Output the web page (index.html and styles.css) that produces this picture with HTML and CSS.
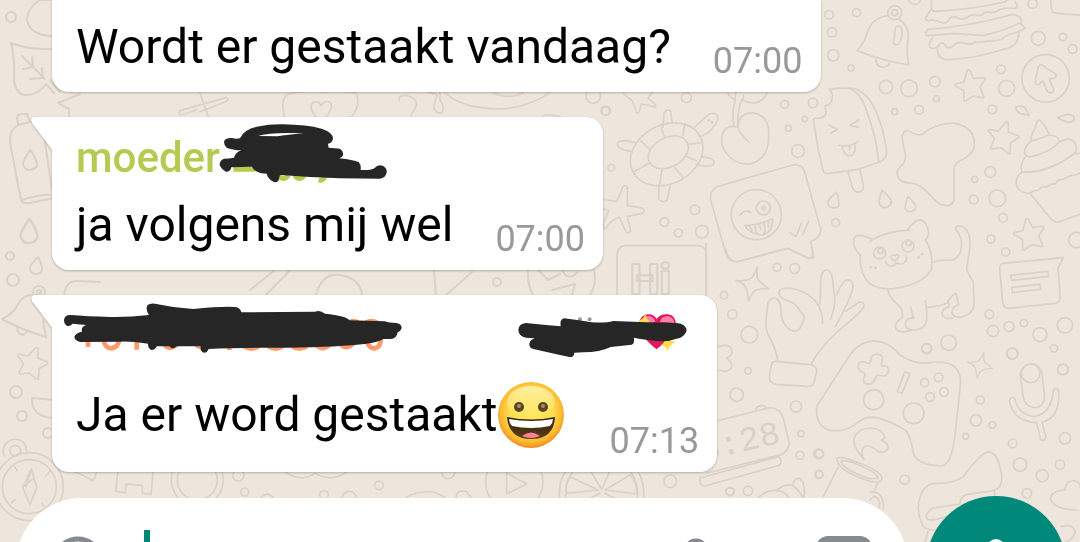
FILE: index.html
```html
<!DOCTYPE html>
<html lang="nl">
<head>
  <meta charset="utf-8">
  <meta name="viewport" content="width=device-width, initial-scale=1">
  <title>Chat</title>
  <link rel="stylesheet" href="styles.css">
</head>
<body>

<!-- Wallpaper doodles -->
<svg class="wallpaper" width="1080" height="542" viewBox="0 0 1080 542" aria-hidden="true">
  <defs>
    <path id="star" d="M-8 -48 Q-3 -50 1 -43 L11 -22 L42 -25 Q48 -23 44 -18 L30 4 L42 32 Q42 38 35 35 L10 30 L-14 46 Q-20 46 -18 38 L-18 14 L-44 0 Q-48 -4 -42 -6 L-18 -12 Z"/>
    <path id="drop" d="M0 -26 Q-20 2 -17 10 Q-12 24 2 22 Q18 18 16 6 Q12 -10 0 -26 Z"/>
    <path id="sparkle" d="M14 -50 Q11 -20 18 -10 L48 14 Q18 12 4 22 Q-8 35 -12 50 Q-16 20 -22 8 Q-32 -6 -50 -10 Q-18 -8 -4 -18 Q8 -30 14 -50 Z"/>
    <path id="bell" d="M-85 49 Q-70 32 -62 14 Q-52 -18 -43 -30 Q-28 -50 0 -55 Q4 -56 8 -57 M38 -47 Q60 -32 66 -12 Q70 6 65 30 Q62 65 70 92 Q-8 80 -85 49 M-30 75 Q-28 98 -8 98 Q8 98 12 87"/>
  </defs>

  <!-- top right: bell, burger, ice cream, puddle, cupcake -->
  <g transform="translate(820 0) scale(.3333)">
    <use href="#bell" x="197" y="103"/>
    <circle cx="224" cy="38" r="21"/><circle cx="224" cy="38" r="9"/>
    <path d="M226 82 Q236 74 244 84 Q250 104 240 126 Q234 140 223 132 Q217 128 224 108 Z"/>
    <path d="M335 -5 L334 28 Q336 34 346 34 Q460 28 555 6 L568 -5 M330 32 L316 56 Q320 66 335 60 Q350 60 365 68 Q380 74 388 56 Q400 44 415 55 Q432 62 450 46 Q470 46 485 46 Q495 30 512 38 Q530 36 540 28 Q560 22 588 25 Q596 18 586 5 M324 88 Q440 80 560 48 Q580 40 594 48 Q606 54 604 66 M324 88 Q312 102 320 107 L400 101 L490 106 Q550 94 600 68 Q608 76 616 85 Q600 94 575 102 Q558 104 545 118 Q530 124 510 122 Q480 130 465 126 Q450 138 430 128 Q412 124 402 136 Q390 148 378 140 Q370 122 360 132 Q348 148 335 145 Q320 140 338 112 M352 144 Q350 180 388 179 Q470 175 550 148 Q600 138 596 96"/>
    <path d="M692 -5 L694 25 Q697 40 712 40 L785 46"/>
    <circle cx="677" cy="235" r="71"/>
    <path d="M664 194 Q654 196 654 206 L646 240 Q645 256 656 255 L668 242 L682 274 Q690 282 698 277 Q704 272 698 262 L688 237 Q702 238 707 230 Q712 224 704 220 Z"/>
    <use href="#star" x="450" y="258"/><use href="#star" transform="translate(546 412) rotate(25)"/>
    <path d="M587 322 Q600 314 614 322 L628 346 L600 340 Q588 334 587 322 Z M713 353 L740 343 Q762 343 763 355 Q762 367 745 367 Q724 362 713 353 Z"/>
    <!-- ice cream -->
    <path d="M28 268 Q70 262 104 266 Q140 276 166 330 Q190 380 200 455 Q200 472 182 485 L115 508 L22 521 Q10 520 9 510 L-5 450 L-20 360 Q-18 352 0 355 Q20 350 18 335 L14 318 Q30 316 34 304 Q42 280 28 268 M85 264 Q120 276 135 320 Q170 410 176 486 M84 516 L96 560 Q104 580 118 576 Q132 570 130 556 L120 508 M28 376 L52 388 L32 400 M116 360 L90 376 L116 382 M56 436 Q86 444 114 424 M66 440 Q72 464 86 468 Q106 470 106 436 M88 440 L89 450"/>
    <!-- puddle -->
    <path d="M264 392 Q294 410 308 402 Q348 368 402 370 Q466 380 463 436 Q460 464 425 480 Q402 488 402 510 L402 580 Q406 610 388 616 Q360 622 335 590 Q300 550 272 549 Q232 548 231 518 Q234 505 250 492 Q262 470 252 445 Q246 420 247 408 Q250 392 264 392 Z"/>
    <!-- cupcake -->
    <path d="M632 424 Q634 400 646 385 Q648 364 658 359 Q674 372 688 404 Q672 412 632 424 M632 424 Q612 440 614 458 Q618 474 634 470 Q692 458 720 424 Q710 404 688 406 M614 472 Q598 500 606 516 Q690 520 768 456 Q772 424 750 418 Q736 416 720 426 M606 517 Q584 530 590 558 Q600 580 630 580 M630 580 Q640 570 654 572 Q664 556 680 562 Q690 550 706 552 Q712 538 730 538 Q750 524 765 526 L790 514 M770 462 L790 458 M630 580 L694 658 Q705 670 722 664 L790 640"/>
    <circle cx="284" cy="-6" r="19"/><circle cx="638" cy="11" r="14"/><circle cx="655" cy="115" r="21"/><circle cx="729" cy="111" r="11"/><circle cx="758" cy="147" r="13"/>
    <circle cx="27" cy="44" r="13"/><circle cx="110" cy="38" r="12"/><circle cx="36" cy="97" r="14"/><circle cx="40" cy="166" r="17"/><circle cx="93" cy="204" r="9"/>
    <circle cx="198" cy="261" r="20"/><circle cx="267" cy="265" r="25"/><circle cx="345" cy="245" r="16"/><circle cx="349" cy="296" r="9"/><circle cx="224" cy="335" r="9"/><circle cx="297" cy="329" r="13"/>
    <circle cx="543" cy="208" r="13"/><circle cx="560" cy="265" r="24"/><circle cx="517" cy="328" r="13"/><circle cx="511" cy="516" r="16"/><circle cx="464" cy="538" r="9"/>
  </g>

  <!-- right: cat and note -->
  <g transform="translate(820 180) scale(.3333)">
    <use href="#drop" transform="translate(43 62) rotate(14)"/><use href="#drop" transform="translate(194 58) rotate(-16) scale(1.1)"/><use href="#drop" transform="translate(270 74) rotate(-14) scale(.95)"/>
    <path d="M150 183 Q205 150 268 151 M122 225 Q110 220 102 195 Q96 168 116 166 Q140 168 156 178 M264 148 Q280 124 300 119 Q322 126 326 158 Q324 178 314 180 M120 225 Q118 280 148 310 Q176 330 220 326 Q310 314 334 268 Q342 220 316 180 M340 247 Q350 240 400 240 Q428 226 424 185 Q420 160 407 150 Q406 136 422 138 Q452 146 450 200 Q444 240 440 265 Q444 284 460 305 L462 370 Q462 404 420 412 Q400 412 396 400 Q396 380 416 374 L408 340 Q396 344 380 370 Q350 382 322 382 M203 330 Q214 360 236 376 Q248 386 248 412 Q226 426 226 442 Q230 458 256 455 L278 450 M272 382 L281 416 Q260 412 256 430 Q256 450 280 450 Q314 452 320 420 Q322 400 316 362 M384 362 L388 380 Q366 386 366 402 Q372 420 400 414"/>
    <circle cx="179" cy="219" r="18"/><circle cx="182" cy="212" r="8"/><circle cx="264" cy="198" r="18"/><circle cx="266" cy="189" r="8"/>
    <path d="M213 229 Q222 222 226 227 Q233 220 236 228 Q234 238 226 243 Q214 240 213 229 Z M197 244 Q202 260 216 258 Q226 256 228 248 Q242 256 254 248 Q262 240 259 228"/>
    <circle cx="152" cy="261" r="2"/><circle cx="167" cy="263" r="2"/><circle cx="296" cy="232" r="2"/><circle cx="307" cy="222" r="2"/>
    <path d="M550 250 L730 233 L714 266 L721 352 Q720 368 706 370 L566 385 Q550 384 548 368 L539 266 Q540 252 550 250 Z M572 286 L684 274 L686 289 L575 301 Z M575 322 L660 313 L662 328 L577 338 Z"/>
    <use href="#star" transform="translate(626 164)"/>
    <circle cx="47" cy="128" r="12"/><circle cx="461" cy="59" r="13"/><circle cx="532" cy="55" r="25"/><circle cx="549" cy="113" r="13"/><circle cx="513" cy="177" r="12"/><circle cx="557" cy="216" r="12"/><circle cx="769" cy="180" r="23"/>
    <circle cx="508" cy="403" r="13"/><circle cx="519" cy="453" r="17"/><circle cx="567" cy="440" r="15"/><circle cx="612" cy="429" r="11"/><circle cx="735" cy="436" r="23"/><circle cx="660" cy="464" r="21"/><circle cx="702" cy="505" r="11"/><circle cx="577" cy="521" r="17"/><circle cx="632" cy="580" r="28"/><circle cx="729" cy="568" r="16"/>
    <circle cx="320" cy="506" r="15"/><circle cx="386" cy="488" r="23"/>
  </g>

  <!-- bottom right: game pad, microphone, mug, sneaker -->
  <g transform="translate(820 350) scale(.3333)">
    <path d="M-10 170 Q40 90 90 15 Q125 -35 180 -25 Q215 -15 240 15 Q285 45 330 38 Q420 25 422 95 L408 230 Q398 345 365 348 Q290 345 280 310 Q270 250 255 240 Q210 212 165 202 Q140 198 115 216 Q80 248 30 241 Q-15 228 -10 170 Z"/>
    <path d="M152 35 Q152 10 174 13 Q190 16 187 30 L184 47 Q208 46 206 62 Q202 84 180 76 Q170 72 167 82 Q160 106 141 102 Q126 98 132 84 Q140 68 126 66 Q112 62 115 44 Q122 30 142 40 Q151 42 152 35 Z M254 66 L270 70 L246 130 L232 125 Z"/>
    <circle cx="161" cy="149" r="30"/><circle cx="281" cy="190" r="31"/><circle cx="314" cy="98" r="12"/><circle cx="356" cy="82" r="13"/><circle cx="372" cy="126" r="13"/><circle cx="330" cy="141" r="13"/>
    <use href="#sparkle" transform="translate(481 45) scale(.78)"/>
    <path d="M601 72 Q608 42 634 42 Q660 42 666 70 L673 130 Q676 172 642 173 Q614 170 609 138 Z M568 152 Q572 136 584 146 Q596 195 644 200 Q694 190 700 122 Q708 110 716 122 Q722 204 666 216 L678 262 Q674 274 662 270 L650 218 Q580 216 568 152 Z"/>
    <path d="M132 328 Q98 290 102 266 Q112 236 150 234 Q186 234 196 262 L184 272 Q206 278 204 296 Q196 310 176 305 Q150 284 136 288 Q118 300 132 328 Z"/>
    <path d="M50 325 Q66 318 110 336 Q184 362 186 386 Q182 402 150 394 Q50 362 50 325 Z M63 334 Q82 328 118 346 Q170 368 174 384 Q150 392 112 372 Q68 354 63 334 Z M54 352 L10 440 M172 400 L164 420 M150 426 Q192 420 190 478 M150 450 Q160 434 172 444 Q184 455 175 475"/>
    <path d="M310 530 Q280 470 310 420 Q326 400 345 400 Q400 402 430 380 Q475 318 502 306 Q530 302 542 360 Q550 390 540 408 Q528 424 500 425 L440 434 Q420 440 420 462 M420 462 L340 474 Q312 490 322 508 Q336 514 380 500 M310 530 Q325 540 350 542 M325 542 L314 580 M524 424 L524 440"/>
    <path d="M735 420 Q738 390 764 392 Q785 396 782 425 M735 420 Q690 424 692 448 Q700 478 770 480 M724 530 Q760 520 766 545 Q764 566 730 580"/>
    <circle cx="320" cy="-5" r="14"/><circle cx="577" cy="11" r="16"/><circle cx="729" cy="59" r="16"/><circle cx="481" cy="150" r="12"/><circle cx="468" cy="211" r="17"/><circle cx="517" cy="225" r="10"/><circle cx="437" cy="259" r="9"/><circle cx="578" cy="280" r="13"/><circle cx="735" cy="265" r="17"/><circle cx="600" cy="344" r="20"/><circle cx="720" cy="344" r="14"/><circle cx="667" cy="377" r="18"/><circle cx="621" cy="430" r="14"/><circle cx="254" cy="389" r="14"/><circle cx="-2" cy="311" r="12"/><circle cx="-3" cy="374" r="12"/>
  </g>

  <!-- centre: turtle, cherry, winking bubble -->
  <g transform="translate(600 80) scale(.3333)">
    <ellipse cx="200" cy="223" rx="114" ry="88" transform="rotate(-28 200 223)"/>
    <ellipse cx="205" cy="217" rx="64" ry="44" transform="rotate(-28 205 217)"/>
    <path d="M184 143 L194 173 M255 131 L249 166 M303 189 L266 192 M290 242 L256 228 M249 292 L225 264 M178 317 L186 268 M104 274 L147 250 M121 181 L150 210"/>
    <path d="M189 142 L192 100 Q200 84 212 94 L217 130 M284 141 L325 104 Q340 94 352 106 Q358 120 342 138 Q330 158 302 170 M305 229 L334 236 Q346 242 340 254 Q324 262 288 253 M177 318 L176 356 Q186 372 202 360 L210 318 M94 215 Q50 206 52 190 Q58 180 80 182 L108 189"/>
    <circle cx="326" cy="121" r="2"/><circle cx="336" cy="127" r="2"/>
    <path d="M446 185 Q415 160 414 138 Q418 98 460 98 Q508 110 506 160 Q510 236 450 252 Q392 256 366 195 Q360 150 390 140 Q404 138 414 140 M414 138 Q410 100 424 62 Q432 58 430 46 M402 140 Q394 95 406 60 Q386 50 382 35 M424 60 Q480 85 502 38 M405 58 L408 35"/>
    <path d="M352 320 L578 255 Q606 250 614 276 L662 448 Q664 474 632 484 L641 530 Q640 538 626 534 L560 505 L415 545 Q386 548 378 522 L332 360 Q328 332 352 320 Z"/>
    <circle cx="469" cy="404" r="75"/><circle cx="490" cy="384" r="21"/><circle cx="491" cy="384" r="5"/>
    <path d="M420 406 Q434 386 452 397 M434 437 Q480 434 518 416 Q520 454 490 465 Q450 464 434 437 M464 434 L468 456 Q476 468 488 464 Q500 458 492 428 M478 432 L482 448 M448 438 L456 452 M505 424 L505 440 M570 458 L588 470 L604 430 M608 464 L626 424"/>
    <path d="M70 40 L96 62 Q106 80 108 96 Q114 104 118 94 L124 72 Q148 76 166 82 Q170 76 160 68 L144 54 L156 38"/>
    <path d="M-10 355 L50 364 Q58 350 68 322 Q76 312 82 322 L82 376 L126 384 Q138 392 126 400 L82 410 L92 452 Q86 464 78 456 L58 412 Q34 420 18 444 Q8 450 10 430 L26 392 L-5 380"/>
    <rect x="51" y="497" width="268" height="240" rx="26"/>
    <circle cx="17" cy="92" r="14"/><circle cx="259" cy="53" r="15"/><circle cx="34" cy="263" r="10"/><circle cx="285" cy="389" r="14"/><circle cx="193" cy="426" r="13"/><circle cx="235" cy="459" r="12"/><circle cx="306" cy="455" r="19"/><circle cx="531" cy="562" r="12"/><circle cx="584" cy="565" r="15"/><circle cx="554" cy="73" r="12"/><circle cx="639" cy="69" r="14"/><circle cx="614" cy="117" r="8"/><circle cx="565" cy="145" r="9"/><circle cx="594" cy="213" r="19"/>
  </g>
  <text class="doodle-hi" x="630" y="294">Hi</text>

  <!-- centre bottom: hand, clock -->
  <g transform="translate(700 250) scale(.3333)">
    <use href="#sparkle" x="158" y="102"/>
    <path d="M233 332 Q230 300 205 255 Q196 240 198 210 L204 158 Q215 138 232 148 Q242 156 243 180 Q242 225 278 244 Q300 244 306 222 Q316 204 310 195 L292 172 Q282 156 262 153 Q230 138 238 122 Q250 110 284 117 Q330 130 350 158 Q368 184 368 220 M358 168 Q362 150 362 90 Q366 58 382 60 Q396 64 398 90 L404 145 Q406 170 392 208 M410 136 Q425 92 444 89 Q464 92 458 120 Q442 165 406 230 M436 184 L478 156 Q494 156 492 170 Q484 186 430 230 Q360 290 334 343"/>
    <path d="M226 334 L330 344 Q352 348 350 366 L342 398 Q338 410 322 409 L228 403 Q206 398 208 380 L214 344 Q218 334 226 334 Z"/>
    <path d="M-60 540 L205 474 Q240 470 250 505 L267 575 Q270 600 244 614 L20 670 M168 480 Q168 470 184 466 Q196 466 198 474 M0 684 L236 620 Q250 632 238 646 L14 708 Q-5 704 0 684 Z"/>
    <path d="M50 290 L76 286 Q96 286 96 306 Q94 320 80 324 Q96 334 95 350 Q92 362 76 364 L50 360"/>
    <path d="M172 745 Q210 710 250 726 L270 745 M234 718 Q256 700 276 706 Q290 712 310 744 M278 702 Q286 682 300 686 Q316 694 312 745"/>
    <path d="M18 -20 L18 140 M76 -5 Q86 36 112 35 L265 -5 M265 -5 L325 26 Q342 24 336 -5"/>
    <circle cx="72" cy="136" r="11"/><circle cx="97" cy="193" r="14"/><circle cx="148" cy="254" r="25"/><circle cx="144" cy="362" r="10"/><circle cx="110" cy="434" r="20"/><circle cx="288" cy="470" r="17"/><circle cx="303" cy="551" r="9"/><circle cx="300" cy="616" r="12"/><circle cx="356" cy="612" r="15"/><circle cx="358" cy="673" r="11"/><circle cx="90" cy="724" r="12"/><circle cx="144" cy="723" r="14"/>
  </g>
  <text class="doodle-clock" transform="translate(702 461) rotate(-13)">8:28</text>

  <!-- left edge: leaf, bottle, bell -->
  <g>
    <circle cx="11" cy="17" r="5"/>
    <path d="M54 0 H40 Q27 8 27 20 Q30 36 54 36 M54 49 Q28 50 11 43 Q15 58 14 80 Q16 95 26 95 Q38 95 46 84 L54 93 M22 56 L45 79 M32 57 L33 67 M23 69 L34 67 M42 68 L43 78 M30 79 L43 78 M50 80 L60 92 M80 94 L58 103 L69 109 V117"/>
    <path d="M17 118 Q17 114 22 114 L27 114 L30 122 L18 125 Z M18 125 Q9 130 10 143 L21 200 Q22 204 30 203 L54 198 M22 200 Q40 194 54 195 M45 142 L52 190"/>
    <circle cx="10" cy="256" r="4"/><circle cx="13" cy="280" r="6"/><circle cx="39" cy="292" r="6"/><circle cx="39" cy="292" r="2"/>
    <path d="M36 295 H30 Q22 296 17 306 Q13 314 2 319 Q22 330 46 337 L43 320 M17 327 Q17 335 24 335 L28 330"/>
    <circle cx="16" cy="392" r="6"/><circle cx="22" cy="416" r="5"/><circle cx="48" cy="433" r="5"/>
    <path d="M54 400 L32 398 Q31 417 54 418"/>
  </g>
  <g transform="scale(.3333)">
    <use href="#drop" transform="translate(91 482) scale(1.25)"/><use href="#drop" transform="translate(88 696) scale(1.5)"/><use href="#drop" transform="translate(110 798) rotate(8) scale(1.1)"/>
    <use href="#star" transform="translate(93 1088) rotate(28)"/>
  </g>

  <!-- bottom strip -->
  <g transform="translate(0 440) scale(.3333)">
    <circle cx="88" cy="140" r="102"/><circle cx="88" cy="140" r="81"/><circle cx="46" cy="32" r="16"/>
    <path d="M14 50 Q0 20 28 2 Q56 -10 74 12 Q82 26 78 42 M94 86 L110 142 L90 194 L68 142 Z M68 142 L102 114 L110 142 M94 86 L78 140 M44 80 L52 92 M150 94 L138 108 M46 178 L34 188 M126 190 L132 200 M215 92 L245 104 Q266 114 276 122 Q286 116 290 92 M354 92 L347 154 L376 158 L378 132 L426 136 L428 160 L453 163 L460 92"/>
    <circle cx="592" cy="120" r="78"/><circle cx="592" cy="120" r="60"/><circle cx="715" cy="106" r="17"/><circle cx="734" cy="156" r="12"/><circle cx="801" cy="186" r="23"/>
    <path d="M850 92 Q900 130 945 100 Q1000 130 1045 92"/>
    <circle cx="1137" cy="136" r="13"/><circle cx="972" cy="165" r="13"/><circle cx="1048" cy="176" r="22"/>
    <path d="M1200 188 Q1235 150 1300 156 Q1340 170 1350 188 M1368 175 Q1370 145 1400 155 L1425 188"/>
    <circle cx="1543" cy="126" r="86"/><path d="M1520 98 V162 L1580 132 Z"/><circle cx="1345" cy="96" r="20"/>
    <circle cx="1805" cy="160" r="127"/><circle cx="1805" cy="160" r="108"/>
    <path d="M1805 148 L1770 90 Q1800 80 1832 88 Z M1795 150 L1710 110 Q1692 135 1700 160 Z M1815 150 L1890 105 Q1915 130 1910 162 Z M1800 160 L1730 195 M1815 160 L1880 195"/>
    <circle cx="2011" cy="124" r="19"/><circle cx="2190" cy="155" r="12"/>
  </g>

  <!-- strip between the first two bubbles -->
  <g transform="translate(260 60) scale(.3333)">
    <path d="M75 174 Q60 125 80 104 Q120 90 185 96 Q250 92 288 98 Q305 135 272 174 M170 174 Q140 135 162 126 Q180 124 183 138 Q192 120 210 126 Q224 142 194 174 M418 122 Q412 105 440 106 Q476 116 468 140 L452 168 M505 97 Q520 100 532 104 Q522 130 522 144 Q528 162 546 158 Q556 144 540 120 L540 98 M556 98 Q600 145 720 147 Q800 145 870 98 M700 98 Q745 120 790 98 M850 168 Q860 160 900 170"/>
    <path d="M-180 98 L-155 172 M-100 112 L-240 152 Q-246 162 -238 166 L-190 150 M-100 112 Q-90 120 -105 126 L-180 155"/>
    <circle cx="1000" cy="108" r="22"/><circle cx="1037" cy="153" r="12"/>
  </g>
  <!-- strip between the last two bubbles -->
  <path d="M64 295 Q66 280 78 281 L100 282 M250 290 L275 270 M266 295 L290 270 M316 295 Q322 272 340 275 Q360 278 362 295 M434 270 L436 295 M472 272 L446 295 M528 270 Q527 284 533 295 M594 270 Q597 284 590 295 M538 270 L548 280 L560 274 M562 270 Q568 282 578 272 M552 290 L575 284 L572 295"/>
  <circle cx="497" cy="282" r="4"/>
</svg>

<main class="chat">
  <article class="bubble bubble-cut">
    <div class="line">
      <p class="text">Wordt er gestaakt vandaag?</p>
      <time class="time">07:00</time>
    </div>
  </article>

  <article class="bubble">
    <svg class="tail" width="22" height="34" viewBox="0 0 22 34" aria-hidden="true"><path d="M4 0 H22 V34 L1 6 Q-1 0 4 0 Z"/></svg>
    <h2 class="name">moeder</h2>
    <svg class="scribble" width="400" height="80" viewBox="0 0 400 80" aria-hidden="true">
      <g transform="translate(-32 -117) scale(.3333)">
        <g class="lime"><path d="M640 508 H706 M672 460 L696 463"/><path d="M776 526 Q790 546 806 526 M824 526 Q838 546 854 526 M896 540 Q910 544 914 530"/></g>
        <path class="ink" fill-rule="evenodd" d="M660 415 Q672 388 710 380 Q750 372 790 373 Q860 374 905 386 Q940 398 939 416 Q936 430 924 431 L926 443 Q948 444 960 446 Q972 454 969 466 Q966 474 958 475 Q1000 480 1016 486 Q1024 494 1022 510 Q1054 512 1064 504 Q1074 492 1090 498 Q1102 506 1100 518 Q1096 534 1080 536 L960 535 Q870 532 780 525 L775 543 Q766 550 758 544 Q744 536 740 521 Q706 520 696 500 L634 502 Q632 514 620 516 Q606 510 599 496 Q598 482 612 476 Q626 476 642 473 Q646 458 664 451 Q636 450 620 443 Q610 434 613 422 Q620 412 636 414 Q648 418 660 415 Z M714 408 Q750 396 852 400 Q800 404 772 409 Z"/>
      </g>
    </svg>
    <div class="line">
      <p class="text">ja volgens mij wel</p>
      <time class="time">07:00</time>
    </div>
  </article>

  <article class="bubble">
    <svg class="tail" width="22" height="34" viewBox="0 0 22 34" aria-hidden="true"><path d="M4 0 H22 V34 L1 6 Q-1 0 4 0 Z"/></svg>
    <!-- number and nickname, both scribbled over -->
    <svg class="scribble" width="660" height="80" viewBox="0 0 660 80" aria-hidden="true">
      <g transform="translate(-32 -10) scale(.3333)">
        <path class="orange" d="M204 160 V186 M250 164 Q256 190 274 190 Q294 188 298 164 M350 160 V194 M430 176 Q450 200 474 176 M528 180 L560 194 M628 180 V195 M672 184 Q694 198 716 184 M744 184 Q766 198 788 184 M816 184 Q838 198 860 184 M886 178 Q908 200 930 178 M958 174 Q980 200 1002 172 M1040 170 Q1050 192 1066 190 Q1082 186 1083 160 M985 112 Q1000 104 1014 112 M1038 112 Q1054 104 1072 112"/>
        <path class="ink" d="M132 105 Q134 90 150 90 Q200 94 270 96 Q330 97 387 90 Q375 72 383 60 Q390 54 405 56 Q460 68 520 72 Q600 64 645 66 Q662 68 664 82 L885 80 Q900 74 915 86 Q980 92 988 106 L1095 109 Q1106 114 1130 114 Q1146 118 1145 130 Q1142 140 1133 142 Q1130 162 1112 162 L1090 162 Q1080 170 1040 176 Q960 186 800 188 Q640 188 566 192 Q562 203 552 203 Q540 200 542 184 L470 184 Q458 196 448 184 L410 184 Q406 195 394 195 Q384 190 384 176 Q330 168 300 170 L180 171 Q164 166 163 156 Q166 144 186 140 Q182 126 198 120 L157 116 Q152 125 142 123 Q132 118 132 105 Z"/>
      </g>
      <g transform="translate(348 -10) scale(.3333)">
        <g class="grey"><circle cx="540" cy="103" r="6"/><circle cx="569" cy="103" r="6"/></g>
        <path class="heart" d="M770 193 Q715 150 716 116 Q722 88 748 88 Q764 90 770 102 Q780 86 804 88 Q828 92 828 118 Q824 150 770 193 Z"/>
        <path class="heart-shine" d="M738 94 Q760 90 766 110 Q752 116 738 112 Z M780 110 Q784 94 804 93 Q822 98 823 114 Z"/>
        <path class="spark" d="M736 88 Q738 98 748 110 L738 124 Q722 112 714 108 Q730 104 736 88 Z M798 154 Q806 172 830 168 Q808 180 803 199 Q800 184 784 180 Q796 172 798 154 Z"/>
        <path class="ink" d="M355 135 Q356 116 378 114 Q430 120 482 124 Q478 104 492 100 Q530 104 575 112 Q620 114 640 108 L740 112 L830 114 Q858 116 860 137 Q852 158 830 161 Q800 172 770 168 Q730 164 702 158 Q704 176 695 179 L632 186 Q600 202 550 202 L523 203 Q522 218 508 216 L470 208 L410 194 Q386 192 388 176 Q390 166 404 160 L378 158 Q356 154 355 135 Z"/>
      </g>
    </svg>
    <div class="line line-emoji">
      <p class="text">Ja er word gestaakt</p>
      <svg class="emoji" width="66" height="66" viewBox="0 0 66 66" role="img" aria-label="grijnzend gezicht">
        <defs>
          <radialGradient id="face" cx=".5" cy=".45" r=".55">
            <stop offset="0" stop-color="#fee85c"/><stop offset=".6" stop-color="#fddc4c"/><stop offset=".84" stop-color="#fbba30"/><stop offset="1" stop-color="#f38b20"/>
          </radialGradient>
          <linearGradient id="shine" x2="0" y2="1"><stop offset="0" stop-color="#fff6b8" stop-opacity=".8"/><stop offset="1" stop-color="#fff6b8" stop-opacity="0"/></linearGradient>
          <linearGradient id="mouth" x2="0" y2="1"><stop offset="0" stop-color="#2c2015"/><stop offset="1" stop-color="#5e3f13"/></linearGradient>
        </defs>
        <circle cx="33" cy="33" r="33" fill="url(#face)"/>
        <ellipse cx="33" cy="20" rx="24" ry="16" fill="url(#shine)"/>
        <circle cx="21" cy="25" r="5" fill="#5a4420"/><circle cx="45" cy="25" r="5" fill="#5a4420"/>
        <circle cx="21" cy="24" r="2" fill="#a68d68"/><circle cx="45" cy="24" r="2" fill="#a68d68"/>
        <path d="M9 35 Q33 40 57 35 Q56 57 33 57 Q11 57 9 35 Z" fill="url(#mouth)"/>
        <path d="M11 37 Q33 41 55 37 Q55 41 52 44 Q33 48 14 44 Q11 41 11 37 Z" fill="#fff"/>
        <path d="M24 54 Q33 47 42 54 Q33 58 24 54 Z" fill="#ff8398"/>
      </svg>
      <time class="time">07:13</time>
    </div>
  </article>
</main>

<form class="composer">
  <div class="field">
    <button class="icon-button" type="button" aria-label="Emoji">
      <svg width="52" height="52" viewBox="0 0 52 52" fill="none" stroke="#868b91" stroke-width="5"><circle cx="26" cy="26" r="23"/><path d="M15 31 Q26 43 37 31"/><path d="M18 19 v3 M34 19 v3"/></svg>
    </button>
    <span class="caret"></span>
    <input class="message" type="text" aria-label="Bericht">
    <button class="icon-button attach" type="button" aria-label="Bijlage">
      <svg width="32" height="50" viewBox="0 0 32 50" fill="none" stroke="#868b91" stroke-width="5"><path d="M8 38 V14 Q8 5 16 5 Q24 5 24 14 V36 Q24 45 16 45"/></svg>
    </button>
    <button class="icon-button camera" type="button" aria-label="Camera">
      <svg width="56" height="50" viewBox="0 0 56 50"><rect width="56" height="50" rx="12" fill="#868b91"/><circle cx="28" cy="27" r="13" fill="#fff"/></svg>
    </button>
  </div>
  <button class="record" type="button" aria-label="Spraakbericht">
    <svg width="50" height="64" viewBox="0 0 50 64" fill="none" stroke="#fff" stroke-width="5"><rect x="16" y="0" width="18" height="38" rx="9" fill="#fff" stroke="none"/><path d="M5 28 Q7 46 25 46 Q43 46 45 28 M25 46 V60"/></svg>
  </button>
</form>

</body>
</html>
```
FILE: styles.css
```css
* {
  box-sizing: border-box;
}

body {
  background-color: #eee6dd;
  color: #000;
  display: flex;
  flex-direction: column;
  font-family: Roboto, "Noto Sans", sans-serif;
  height: 100vh;
  margin: 0;
  overflow: hidden;
}

button {
  background: none;
  border: 0;
  cursor: pointer;
  padding: 0;
}

/* Wallpaper */

.wallpaper {
  fill: none;
  left: 0;
  position: absolute;
  stroke: #dad1c8;
  stroke-linecap: round;
  stroke-linejoin: round;
  stroke-width: 2;
  top: 0;
  z-index: -1;
}

.wallpaper g[transform] {
  stroke-width: 5;
}

.doodle-hi {
  font-size: 42px;
  font-weight: 900;
}

.doodle-clock {
  fill: #dad1c8;
  font-family: "Liberation Mono", monospace;
  font-size: 34px;
  stroke: none;
}

/* Messages */

.chat {
  align-items: flex-start;
  display: flex;
  flex-direction: column;
  flex-shrink: 0;
  gap: 25px;
  padding: 0 52px;
}

.bubble {
  background-color: #fff;
  border-radius: 0 17px 17px 17px;
  filter: drop-shadow(0 1px 1px rgba(0, 0, 0, 0.25));
  padding: 16px 18px 10px 24px;
  position: relative;
}

.bubble-cut {
  border-top-right-radius: 0;
  padding-top: 17px;
}

.tail {
  fill: #fff;
  left: -21px;
  position: absolute;
  top: 0;
}

.name {
  color: #b4cb51;
  font-size: 42px;
  font-weight: 500;
  line-height: 50px;
  margin: 0 0 12px;
}

.line {
  align-items: flex-end;
  display: flex;
}

.text {
  font-size: 48px;
  line-height: 60px;
  margin: 0 0 5px;
}

.time {
  color: #999;
  font-size: 36px;
  line-height: 42px;
  margin-left: 42px;
}

.line-emoji {
  align-items: center;
  padding: 71px 0 14px;
}

.line-emoji .text {
  margin: 0;
}

.line-emoji .time {
  align-self: flex-end;
  margin: 0 0 -14px 46px;
}

/* Scribbles over names */

.scribble {
  fill: none;
  left: 0;
  position: absolute;
  stroke-width: 14;
  top: 0;
}

.ink {
  fill: #262626;
}

.lime {
  stroke: #b4cb51;
}

.orange {
  stroke: #ff9a6c;
}

.grey {
  fill: #999;
}

.heart {
  fill: #e2195f;
}

.heart-shine {
  fill: #ff7fae;
}

.spark {
  fill: #fddc4c;
}

/* Composer */

.composer {
  align-items: flex-start;
  display: flex;
  flex: 1;
  gap: 18px;
  margin-top: 24px;
  min-height: 0;
  overflow: hidden;
  padding: 0 14px 0 16px;
}

.field {
  align-items: flex-start;
  background-color: #fff;
  border-radius: 66px;
  display: flex;
  flex: 1;
  height: 132px;
  margin-top: 2px;
  min-width: 0;
  padding: 38px 36px 0;
}

.caret {
  background-color: #00897b;
  height: 60px;
  margin: -6px 0 0 40px;
  width: 6px;
}

.message {
  background: none;
  border: 0;
  flex: 1;
  font: inherit;
  font-size: 48px;
  height: 52px;
  min-width: 0;
  outline: 0;
}

.attach {
  margin-right: 104px;
}

.record {
  background-color: #00897b;
  border-radius: 50%;
  height: 140px;
  padding-top: 12px;
  width: 140px;
}
```
